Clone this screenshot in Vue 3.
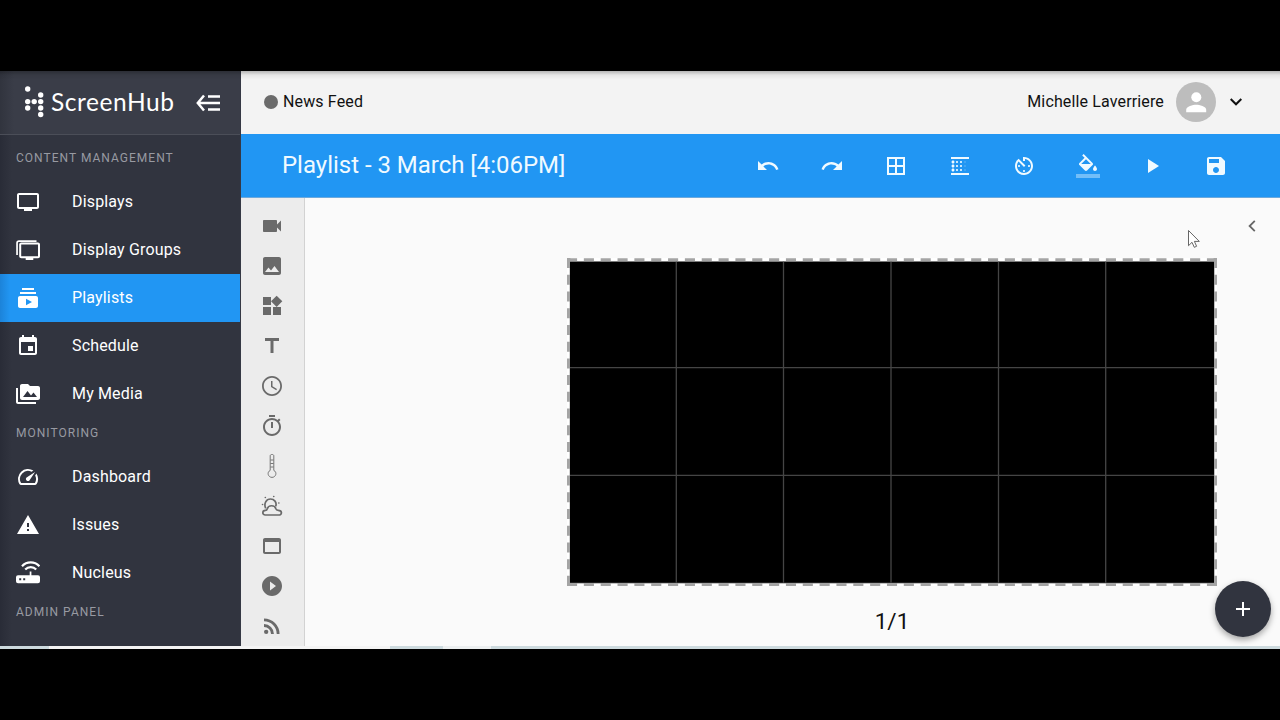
<script setup>
const sections = [
  {
    title: 'CONTENT MANAGEMENT',
    items: [
      { label: 'Displays', d: 'M21 3H3c-1.100 0-2 .9-2 2v12c0 1.100.9 2 2 2h5v2h8v-2h5c1.100 0 2-.9 2-2V5c0-1.100-.9-2-2-2zm0 14H3V5h18v12z' },
      { label: 'Display Groups', d: 'M22 4.600H5.500c-1.300 0-2.300.9-2.300 2v11.600c0 1.200 1 2 2.300 2h4.200V22h7.600v-1.800H22c1.200 0 2-.9 2-2V6.600c0-1.100-.9-2-2-2zm0 13.700H5.200V6.500H22zM20.500 3.900V2.300H3C1.300 2.300.2 3.400.2 5v12h1.700V5c0-.7.4-1.100 1.200-1.100z' },
      { label: 'Playlists', active: true, d: 'M20 8H4V6h16v2zm-2-6H6v2h12V2zm4 10v8c0 1.100-.9 2-2 2H4c-1.100 0-2-.9-2-2v-8c0-1.100.9-2 2-2h16c1.100 0 2 .9 2 2zm-6 4l-6-3.270v6.530L16 16z' },
      { label: 'Schedule', d: 'M17 12h-5v5h5v-5zM16 1v2H8V1H6v2H5c-1.110 0-1.990.9-1.990 2L3 19c0 1.100.89 2 2 2h14c1.100 0 2-.9 2-2V5c0-1.100-.9-2-2-2h-1V1h-2zm3 18H5V8h14v11z' },
      { label: 'My Media', d: 'M2 6H0v14c0 1.100.9 2 2 2h18v-2H2V6zm20-2h-8l-2-2H6c-1.100 0-1.990.9-1.990 2L4 16c0 1.100.9 2 2 2h16c1.100 0 2-.9 2-2V6c0-1.100-.9-2-2-2zM7 15l4.500-6 3.500 4.510 2.500-3.010L21 15H7z' },
    ],
  },
  {
    title: 'MONITORING',
    items: [
      { label: 'Dashboard', d: 'M20.380 8.570l-1.230 1.850a8 8 0 0 1-.22 7.580H5.070A8 8 0 0 1 15.580 6.850l1.850-1.230A10 10 0 0 0 3.350 19a2 2 0 0 0 1.720 1h13.850a2 2 0 0 0 1.740-1 10 10 0 0 0-.27-10.440zm-9.790 6.840a2 2 0 0 0 2.830 0l5.660-8.490-8.490 5.660a2 2 0 0 0 0 2.830z' },
      { label: 'Issues', d: 'M1 21h22L12 2 1 21zm12-3h-2v-2h2v2zm0-4h-2v-4h2v4z' },
      { label: 'Nucleus', router: true },
    ],
  },
  { title: 'ADMIN PANEL', items: [] },
]

const actions = [
  { name: 'Undo', d: 'M12.500 8c-2.650 0-5.050.99-6.900 2.600L2 7v9h9l-3.620-3.620c1.390-1.160 3.160-1.880 5.120-1.880 3.540 0 6.550 2.310 7.600 5.500l2.370-.78C21.080 11.030 17.150 8 12.500 8z' },
  { name: 'Redo', d: 'M18.400 10.600C16.550 8.990 14.150 8 11.500 8c-4.650 0-8.580 3.030-9.960 7.220L3.900 16c1.050-3.190 4.050-5.500 7.600-5.500 1.950 0 3.730.72 5.120 1.880L13 16h9V7l-3.600 3.600z' },
  { name: 'Grid', d: 'M3 3v18h18V3H3zm8 16H5v-6h6v6zm0-8H5V5h6v6zm8 8h-6v-6h6v6zm0-8h-6V5h6v6z' },
  { name: 'Blur', d: 'M5 17.500c.83 0 1.500-.67 1.500-1.500s-.67-1.500-1.500-1.500-1.500.67-1.500 1.500.67 1.500 1.500 1.500zM9 13c.55 0 1-.45 1-1s-.45-1-1-1-1 .45-1 1 .45 1 1 1zm0-4c.55 0 1-.45 1-1s-.45-1-1-1-1 .45-1 1 .45 1 1 1zM3 21h18v-2H3v2zM5 9.500c.83 0 1.500-.67 1.500-1.500S5.830 6.500 5 6.500 3.500 7.170 3.500 8 4.170 9.500 5 9.500zm0 4c.83 0 1.500-.67 1.500-1.500s-.67-1.500-1.500-1.500-1.500.67-1.500 1.500.67 1.500 1.500 1.500zM9 17c.55 0 1-.45 1-1s-.45-1-1-1-1 .45-1 1 .45 1 1 1zm8-.5c.28 0 .5-.22.5-.5s-.22-.5-.5-.5-.5.22-.5.500.22.500.5.500zM3 3v2h18V3H3zm14 5.500c.28 0 .5-.22.500-.5s-.22-.5-.5-.5-.5.220-.5.500.22.500.5.500zm0 4c.28 0 .5-.22.500-.5s-.22-.5-.5-.5-.5.220-.5.500.22.500.5.500zM13 9c.55 0 1-.45 1-1s-.45-1-1-1-1 .45-1 1 .45 1 1 1zm0 4c.55 0 1-.45 1-1s-.45-1-1-1-1 .45-1 1 .45 1 1 1zm0 4c.55 0 1-.45 1-1s-.45-1-1-1-1 .45-1 1 .45 1 1 1z' },
  { name: 'Timer', d: 'M11 17c0 .55.45 1 1 1s1-.45 1-1-.45-1-1-1-1 .45-1 1zm0-14v4h2V5.080c3.390.49 6 3.390 6 6.920 0 3.870-3.130 7-7 7s-7-3.130-7-7c0-1.680.59-3.220 1.580-4.420L12 13l1.410-1.410-6.800-6.800v.02C4.420 6.450 3 9.050 3 12c0 4.970 4.020 9 9 9 4.970 0 9-4.030 9-9s-4.030-9-9-9h-1zm7 9c0-.55-.45-1-1-1s-1 .45-1 1 .45 1 1 1 1-.45 1-1zM6 12c0 .55.45 1 1 1s1-.45 1-1-.45-1-1-1-1 .45-1 1z' },
  { name: 'Fill', fill: true, d: 'M16.560 8.940L7.620 0 6.210 1.410l2.380 2.380-5.150 5.150c-.59.590-.59 1.540 0 2.120l5.500 5.500c.29.290.68.440 1.060.44s.77-.15 1.060-.44l5.500-5.500c.59-.58.59-1.530 0-2.120zM5.210 10L10 5.210 14.790 10H5.210zM19 11.500s-2 2.170-2 3.500c0 1.100.9 2 2 2s2-.9 2-2c0-1.330-2-3.500-2-3.500z' },
  { name: 'Play', d: 'M8 5v14l11-7z' },
  { name: 'Save', d: 'M17 3H5c-1.110 0-2 .9-2 2v14c0 1.100.89 2 2 2h14c1.100 0 2-.9 2-2V7l-4-4zm-5 16c-1.660 0-3-1.340-3-3s1.340-3 3-3 3 1.340 3 3-1.340 3-3 3zm3-10H5V5h10v4z' },
]

const tools = [
  { name: 'Video', d: 'M17 10.500V7c0-.55-.45-1-1-1H4c-.55 0-1 .45-1 1v10c0 .55.45 1 1 1h12c.55 0 1-.45 1-1v-3.500l4 4v-11l-4 4z' },
  { name: 'Image', d: 'M21 19V5c0-1.100-.9-2-2-2H5c-1.100 0-2 .9-2 2v14c0 1.100.9 2 2 2h14c1.100 0 2-.9 2-2zM8.500 13.500l2.500 3.010L14.500 12l4.500 6H5l3.500-4.500z' },
  { name: 'Widgets', d: 'M13 13v8h8v-8h-8zM3 21h8v-8H3v8zM3 3v8h8V3H3zm13.660-1.310L11 7.340 16.660 13l5.660-5.660-5.660-5.650z' },
  { name: 'Text', d: 'M5 4v3h5.500v12h3V7H19V4z' },
  { name: 'Clock', d: 'M11.990 2C6.470 2 2 6.480 2 12s4.470 10 9.990 10C17.520 22 22 17.520 22 12S17.520 2 11.990 2zM12 20.200c-4.530 0-8.200-3.670-8.200-8.200S7.470 3.800 12 3.800s8.200 3.670 8.200 8.200-3.670 8.200-8.200 8.200zm.5-13.200H11v6l5.250 3.150.75-1.230-4.500-2.670z' },
  { name: 'Stopwatch', d: 'M15 1H9v2h6V1zm-4 13h2V8h-2v6zm8.030-6.610l1.420-1.420c-.43-.51-.9-.99-1.410-1.410l-1.420 1.420C16.070 4.740 14.120 4 12 4c-4.970 0-9 4.030-9 9s4.020 9 9 9 9-4.030 9-9c0-2.120-.74-4.070-1.970-5.610zM12 20c-3.870 0-7-3.130-7-7s3.130-7 7-7 7 3.130 7 7-3.130 7-7 7z' },
  { name: 'Temperature', thin: true, d: 'M10.200 16.400V1.900c0-2 3.600-2 3.600 0v14.500c3.700 1.700 2.100 7-1.800 7s-5.500-5.300-1.800-7M10.500 6h3M10.500 9.500h3M10.500 13h3' },
  { name: 'Weather', weather: true, d: 'M18.600 21H5.300c-3.300 0-3.300-4.600.1-4.700 1.400 0 1.600-.5 1.900-1.600 1.100-3.900 7.500-4 8.600.1.300 1 .6 1.500 2.300 1.500 4.200 0 4.200 4.700.4 4.700zM5.700 14.300C3.500 9.500 6.300 5 10.500 5c3.700 0 6.500 3.300 5.300 7.200' },
  { name: 'Web page', d: 'M19 4H5c-1.110 0-2 .9-2 2v12c0 1.100.89 2 2 2h14c1.100 0 2-.9 2-2V6c0-1.100-.89-2-2-2zm0 14H5V8h14v10z' },
  { name: 'Stream', d: 'M12 2C6.480 2 2 6.480 2 12s4.480 10 10 10 10-4.480 10-10S17.520 2 12 2zm-2 14.500v-9l6 4.500-6 4.500z' },
  { name: 'RSS', d: 'M6.180 15.640a2.180 2.180 0 1 1 0 4.360 2.180 2.180 0 0 1 0-4.360M4 4.440A15.560 15.560 0 0 1 19.560 20h-2.830A12.730 12.730 0 0 0 4 7.270zm0 5.660a9.900 9.900 0 0 1 9.900 9.900h-2.830A7.070 7.070 0 0 0 4 12.930z' },
]

const logoDots = [[3.700, 3], [16.700, 9], [3.700, 15.600], [10.200, 15.600], [16.700, 15.600], [3.700, 22], [16.700, 22], [16.700, 28.500]]
</script>

<template>
  <div class="screen">
    <div class="app">
      <aside class="sidebar">
        <div class="brand">
          <svg class="logo" width="20" height="32" viewBox="0 0 20 32">
            <circle v-for="(p, i) in logoDots" :key="i" :cx="p[0]" :cy="p[1]" r="2.700" fill="#fff" />
          </svg>
          <span class="brand-name">ScreenHub</span>
          <svg class="collapse" width="26" height="20" viewBox="0 0 26 20" fill="none" stroke="#fff" stroke-width="2.500">
            <path d="M8 2.500 1.800 10 8 17.500M1.800 10H24M12 3.500h12M12 16.500h12" />
          </svg>
        </div>
        <nav>
          <section v-for="s in sections" :key="s.title">
            <h2>{{ s.title }}</h2>
            <a v-for="item in s.items" :key="item.label" class="nav-item" :class="{ active: item.active }">
              <svg width="24" height="24" viewBox="0 0 24 24" fill="currentColor">
                <template v-if="item.router">
                  <path fill-rule="evenodd" d="M2 14.200h11.700V10.500h1.700v3.700H22a2 2 0 0 1 2 2v4a2 2 0 0 1-2 2H2a2 2 0 0 1-2-2v-4a2 2 0 0 1 2-2zM3.200 17.200v2h2v-2zm4 0v2h2v-2z" />
                  <path d="M6 5.200c4.700-5 12.700-5 17.400 0M9.200 8.600c3.100-3.200 8-3.200 11 0" fill="none" stroke="currentColor" stroke-width="2.200" />
                </template>
                <path v-else :d="item.d" fill-rule="evenodd" />
              </svg>
              <span>{{ item.label }}</span>
            </a>
          </section>
        </nav>
      </aside>

      <div class="main">
        <header class="topbar">
          <div class="feed"><i class="dot"></i><span>News Feed</span></div>
          <div class="user">
            <span>Michelle Laverriere</span>
            <svg class="avatar" width="40" height="40" viewBox="0 0 40 40">
              <circle cx="20" cy="20" r="20" fill="#bdbdbd" />
              <circle cx="20.300" cy="15.200" r="5" fill="#fff" />
              <path d="M10.200 30.200v-2.500c0-3.300 6.700-5 10-5s10 1.700 10 5v2.500z" fill="#fff" />
            </svg>
            <svg class="chevron" width="12" height="8" viewBox="0 0 12 8" fill="none" stroke="#111" stroke-width="2">
              <path d="m.7 1 5.300 5.300L11.300 1" />
            </svg>
          </div>
        </header>

        <div class="titlebar">
          <h1>Playlist - 3 March [4:06PM]</h1>
          <div class="actions">
            <svg v-for="a in actions" :key="a.name" width="24" height="24" viewBox="0 0 24 24" fill="#f0faff">
              <path :d="a.d" />
              <path v-if="a.fill" d="M0 20h24v4H0z" fill-opacity=".4" />
            </svg>
          </div>
        </div>

        <div class="workspace">
          <div class="tools">
            <svg v-for="t in tools" :key="t.name" width="24" height="24" viewBox="0 0 24 24" fill="#6a6a6a">
              <path v-if="t.thin" :d="t.d" fill="none" stroke="#6a6a6a" stroke-width=".9" />
              <template v-else-if="t.weather">
                <path :d="t.d" fill="none" stroke="#6a6a6a" stroke-width="1.700" />
                <path d="M2.500 10.500h.1M5.300 3.500h.1M13.700 2.500h.1M18.800 9h.1" stroke="#6a6a6a" stroke-width="1.600" stroke-linecap="round" />
              </template>
              <path v-else :d="t.d" />
            </svg>
          </div>

          <div class="stage">
            <svg class="back" width="8" height="12" viewBox="0 0 8 12" fill="none" stroke="#666" stroke-width="1.800">
              <path d="M6.800.8 1.600 6l5.200 5.200" />
            </svg>
            <svg class="cursor" width="14" height="20" viewBox="0 0 14 20">
              <path d="M1.500 1.500v15.200l3.500-3.400 2.300 5 2.300-1-2.200-4.900h4.900z" fill="#fff" stroke="#555" stroke-width=".9" />
            </svg>
            <svg class="canvas" width="650" height="328" viewBox="0 0 650 328">
              <rect width="650" height="328" fill="#fff" />
              <rect x="2.600" y="3" width="645" height="322.600" fill="#999" />
              <g stroke="#a4a4a4" stroke-width="3.400">
                <path d="M0 1.900H650M0 326.300H650" stroke-dasharray="10.100 6.740" />
                <path d="M1.700 0V328M648.300 0V328" stroke-dasharray="10 6.730" />
              </g>
              <rect x="3" y="3.800" width="644" height="321" />
              <path d="M109.300 3.800v321M216.500 3.800v321M324 3.800v321M431.500 3.800v321M538.700 3.800v321M3 109.700h644M3 217.300h644" stroke="#454545" stroke-width="1.300" />
            </svg>
            <p class="pager">1/1</p>
            <button class="fab">
              <svg width="16" height="16" viewBox="0 0 16 16" stroke="#fff" stroke-width="2"><path d="M8 1v14M1 8h14" /></svg>
            </button>
          </div>
        </div>
      </div>
    </div>
    <div class="taskbar"><i class="tab wide"></i><i class="tab"></i></div>
  </div>
</template>

<style>
body { margin: 0; background: #000; }
</style>

<style scoped>
.screen {
  box-sizing: border-box;
  width: 1280px;
  height: 720px;
  padding-top: 71px;
  overflow: hidden;
  background: #000;
  font-family: Roboto, "Liberation Sans", sans-serif;
}
.screen svg { display: block; flex: none; }
.app { position: relative; display: flex; height: 575px; overflow: hidden; }
.app::after {
  content: "";
  position: absolute;
  inset: 0 0 auto;
  height: 9px;
  background: linear-gradient(rgba(0, 0, 0, .26), rgba(0, 0, 0, .06) 45%, transparent);
}
.sidebar {
  width: 241px;
  flex: none;
  box-sizing: border-box;
  border-right: 1px solid #353844;
  background: linear-gradient(90deg, #292c37, #31343f 12px);
  color: #fff;
}
.brand {
  display: flex;
  align-items: center;
  height: 64px;
  padding: 0 0 1px 24px;
  box-sizing: border-box;
  border-bottom: 1px solid #4b4e58;
  background: linear-gradient(90deg, #31343e, #3a3d48 14px);
}
.brand-name {
  width: 124px;
  margin: 0 21px 0 7px;
  font: 400 24.500px/30px Lato, sans-serif;
  letter-spacing: .55px;
  white-space: nowrap;
}
.collapse { margin-top: 2px; }
h2 {
  height: 30px;
  margin: 0;
  padding: 0 0 5px 16px;
  color: #989aa2;
  font-size: 12px;
  font-weight: 400;
  line-height: 31px;
  letter-spacing: 1.020px;
}
section:first-child h2 { padding-top: 8px; }
.nav-item {
  display: flex;
  align-items: center;
  height: 48px;
  padding-left: 16px;
  gap: 32px;
  font-size: 16px;
  letter-spacing: .16px;
}
.nav-item span { margin-top: -1px; }
.active { background: linear-gradient(90deg, #1c83d9, #2196f3 10px); }
.main { flex: 1; min-width: 0; display: flex; flex-direction: column; }
.topbar {
  display: flex;
  align-items: center;
  justify-content: space-between;
  height: 63px;
  padding: 0 38px 2px 23px;
  box-sizing: border-box;
  background: #f3f3f3;
  color: #111;
  font-size: 16px;
  letter-spacing: .14px;
}
.feed, .user { display: flex; align-items: center; }
.feed { gap: 5px; }
.dot { width: 14px; height: 14px; border-radius: 50%; background: #6b6b6b; }
.avatar { margin: 0 14px 0 12px; }
.titlebar {
  display: flex;
  align-items: center;
  justify-content: space-between;
  height: 64px;
  padding: 0 52px 0 41px;
  box-sizing: border-box;
  border-bottom: 1px solid #6da9dc;
  background: #2196f3;
}
h1 { margin: -1px 0 0; color: #f0faff; font-size: 24px; font-weight: 400; letter-spacing: -.02px; }
.actions { display: flex; gap: 40px; }
.workspace { display: flex; flex: 1; }
.tools {
  display: flex;
  flex-direction: column;
  align-items: center;
  gap: 16px;
  width: 64px;
  padding: 15.500px 1px 0 0;
  box-sizing: border-box;
  border-right: 1px solid #d2d2d2;
  background: #ececec;
}
.stage { position: relative; flex: 1; background: #fafafa; }
.canvas { margin: 60px 0 0 262px; }
.back { position: absolute; top: 22px; right: 24px; }
.cursor { position: absolute; left: 882px; top: 31px; }
.pager { width: 650px; margin: 20px 0 0 262px; text-align: center; color: #111; font-size: 22.500px; line-height: 30px; }
.fab {
  position: absolute;
  right: 9px;
  bottom: 9px;
  display: grid;
  place-items: center;
  width: 56px;
  height: 56px;
  padding: 0;
  border: 0;
  border-radius: 50%;
  background: #31343f;
  box-shadow: 0 3px 6px rgba(0, 0, 0, .35);
}
.taskbar { display: flex; gap: 53px; height: 3px; padding-left: 49px; background: #cddade; }
.tab { width: 48px; background: #eceff0; }
.wide { width: 341px; background: #f4f4f4; }
</style>
